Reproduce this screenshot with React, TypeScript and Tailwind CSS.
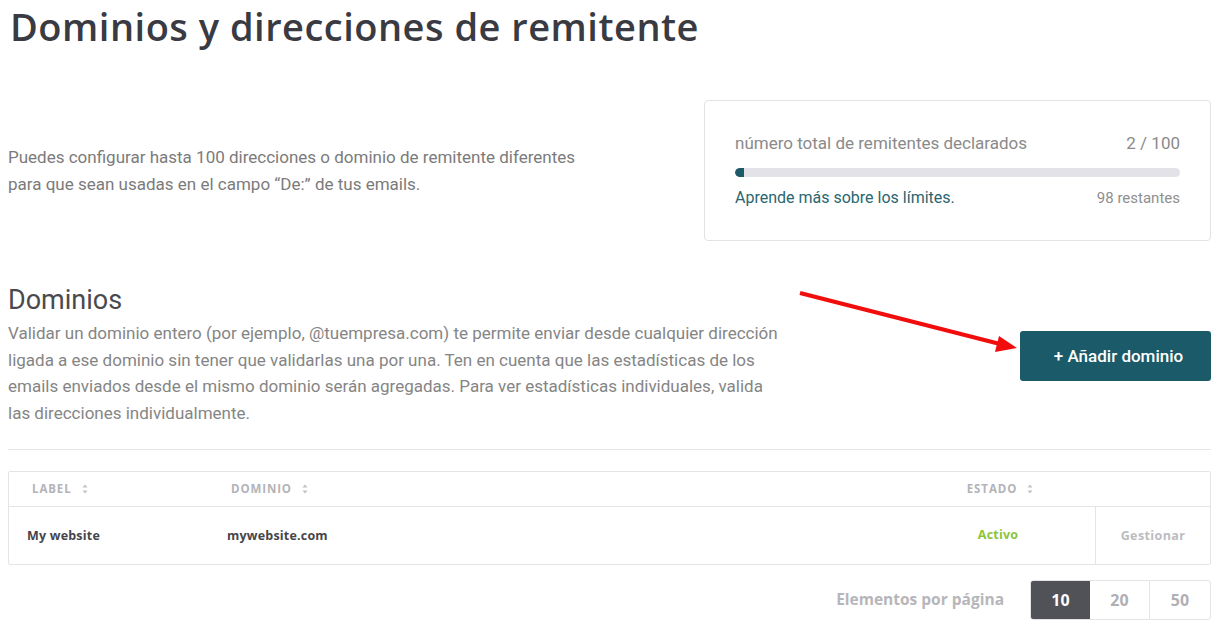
import React from "react";

function SortIcon() {
  return (
    <svg width="6" height="10" viewBox="0 0 6 10" className="ml-[10px] inline-block">
      <path d="M3 0.5 L5.5 3.5 H0.5 Z" fill="#c2c2c6" />
      <path d="M3 9.5 L5.5 6.5 H0.5 Z" fill="#c2c2c6" />
    </svg>
  );
}

export default function App() {
  const roboto = { fontFamily: "Roboto, 'Liberation Sans', sans-serif" };
  const ubuntu = { fontFamily: "'Open Sans', 'DejaVu Sans', sans-serif" };
  return (
    <div className="relative w-[1222px] h-[631px] bg-white overflow-hidden">
      <div className="pl-2 pr-[11px]">
        <h1
          className="pl-[2px] pt-[2px] text-[38px] leading-[48px] font-semibold tracking-[0.5px] text-[#3a3a42]"
          style={{ fontFamily: "'Open Sans', 'Noto Sans', sans-serif" }}
        >
          Dominios y direcciones de remitente
        </h1>

        <div className="mt-[50px] flex items-center justify-between">
          <p className="text-[17px] leading-[27px] text-[#7b7b7b]" style={roboto}>
            Puedes configurar hasta 100 direcciones o dominio de remitente diferentes
            <br />
            para que sean usadas en el campo “De:” de tus emails.
          </p>
          <div
            className="w-[507px] h-[141px] border border-[#e3e3e6] rounded-[4px] px-[30px] pt-[30px]"
            style={roboto}
          >
            <div className="flex justify-between text-[17px] leading-[24px] text-[#8a8a8a]">
              <span>número total de remitentes declarados</span>
              <span>2 / 100</span>
            </div>
            <div className="mt-[13px] h-[9px] rounded-full bg-[#e2e2e8] overflow-hidden">
              <div className="h-full w-[9px] rounded-l-full rounded-r-[2px] bg-[#1c5a68]" />
            </div>
            <div className="mt-[10px] flex justify-between items-center leading-[22px]">
              <span className="text-[16px] text-[#2a6670]">Aprende más sobre los límites.</span>
              <span className="text-[15px] text-[#8f8f8f]">98 restantes</span>
            </div>
          </div>
        </div>

        <div className="mt-[43px] flex items-center justify-between">
          <div style={roboto}>
            <h2 className="text-[27px] leading-[32px] text-[#4a4a4e]">Dominios</h2>
            <p className="mt-[4px] text-[17px] leading-[26.7px] text-[#858585]">
              Validar un dominio entero (por ejemplo, @tuempresa.com) te permite enviar desde cualquier dirección
              <br />
              ligada a ese dominio sin tener que validarlas una por una. Ten en cuenta que las estadísticas de los
              <br />
              emails enviados desde el mismo dominio serán agregadas. Para ver estadísticas individuales, valida
              <br />
              las direcciones individualmente.
            </p>
          </div>
          <button
            className="w-[191px] h-[50px] mt-[2px] rounded-[3px] bg-[#1b5a68] text-white text-[17px] font-medium flex items-center justify-center pl-[6px]"
            style={roboto}
          >
            + Añadir dominio
          </button>
        </div>

        <div className="mt-[22px] h-px bg-[#e6e6e8]" />

        <div className="mt-[21px] border border-[#e4e4e6] rounded-[2px]" style={ubuntu}>
          <div className="flex items-center h-[35px] border-b border-[#e4e4e6] text-[11.5px] font-bold tracking-[0.9px] text-[#b3b3b8]">
            <div className="w-[222px] pl-[23px] flex items-center">
              LABEL
              <SortIcon />
            </div>
            <div className="flex-1 flex items-center">
              DOMINIO
              <SortIcon />
            </div>
            <div className="w-[196px] flex items-center justify-center pl-[6px]">
              ESTADO
              <SortIcon />
            </div>
            <div className="w-[115px]" />
          </div>
          <div className="flex items-center h-[57px] text-[12.5px] font-bold text-[#45454a] tracking-[0.2px]">
            <div className="w-[218px] pl-[18px] pt-[3px]">My website</div>
            <div className="flex-1 pt-[3px]">mywebsite.com</div>
            <div className="w-[196px] text-center text-[#8cc43c] pl-[2px] pt-[1px]">Activo</div>
            <div className="w-[115px] h-full border-l border-[#e4e4e6] flex items-center justify-center text-[#bcbcc0] tracking-[0.4px] pt-[3px]">
              Gestionar
            </div>
          </div>
        </div>

        <div className="mt-[15px] flex items-center justify-end" style={ubuntu}>
          <span className="text-[15.5px] font-bold text-[#b6b6ba] mr-[26px]">Elementos por página</span>
          <div className="flex h-[40px] rounded-[3px] border border-[#e4e4e6] overflow-hidden text-[16px] font-bold">
            <div className="w-[59px] flex items-center justify-center bg-[#515158] text-white">10</div>
            <div className="w-[60px] flex items-center justify-center text-[#b0b0b4] border-r border-[#e4e4e6]">20</div>
            <div className="w-[60px] flex items-center justify-center text-[#b0b0b4]">50</div>
          </div>
        </div>
      </div>

      <svg
        className="absolute left-0 top-0 pointer-events-none"
        width="1222"
        height="631"
        viewBox="0 0 1222 631"
      >
        <line x1="800" y1="293" x2="1000" y2="344" stroke="#f20d0d" strokeWidth="4" />
        <polygon points="1017,348 999,336 995,352" fill="#f20d0d" />
      </svg>
    </div>
  );
}
